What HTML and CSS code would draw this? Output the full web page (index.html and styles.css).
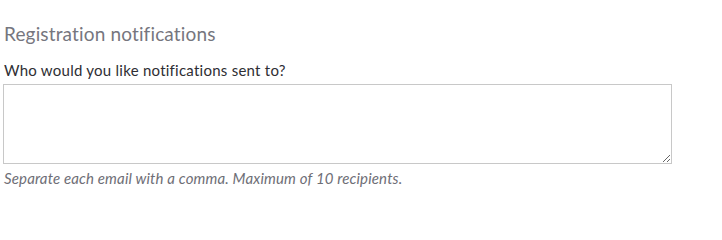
FILE: index.html
```html
<!DOCTYPE html>
<html>
<head>
<meta charset="utf-8">
<link rel="stylesheet" href="styles.css">
</head>
<body>
<section class="panel">
  <h2 class="title">Registration notifications</h2>
  <label class="label" for="recipients">Who would you like notifications sent to?</label>
  <textarea id="recipients" class="field"></textarea>
  <p class="help">Separate each email with a comma. Maximum of 10 recipients.</p>
</section>
</body>
</html>
```
FILE: styles.css
```css
html, body {
  margin: 0;
  padding: 0;
  background: #ffffff;
}
body {
  font-family: Lato, "Noto Sans", sans-serif;
  font-variant-ligatures: none;
}
.panel {
  display: flex;
  flex-direction: column;
  align-items: flex-start;
  padding: 22px 3px 0 3px;
}
.title {
  margin: 0 0 0 1px;
  font-size: 19px;
  font-weight: 400;
  color: #76767e;
  line-height: 24px;
  letter-spacing: 0.15px;
}
.label {
  margin: 14px 0 0 1px;
  font-size: 15px;
  line-height: 20px;
  color: #2e2e33;
  letter-spacing: 0.25px;
}
.field {
  box-sizing: border-box;
  margin: 4px 0 0 0;
  width: 669px;
  height: 80px;
  border: 1px solid #c8c8c8;
  border-radius: 0;
  padding: 4px;
  font: inherit;
  resize: vertical;
  outline: none;
}
.help {
  margin: 5px 0 0 1px;
  font-size: 15px;
  font-style: italic;
  line-height: 18px;
  color: #6e6e76;
  letter-spacing: 0.15px;
}
```
